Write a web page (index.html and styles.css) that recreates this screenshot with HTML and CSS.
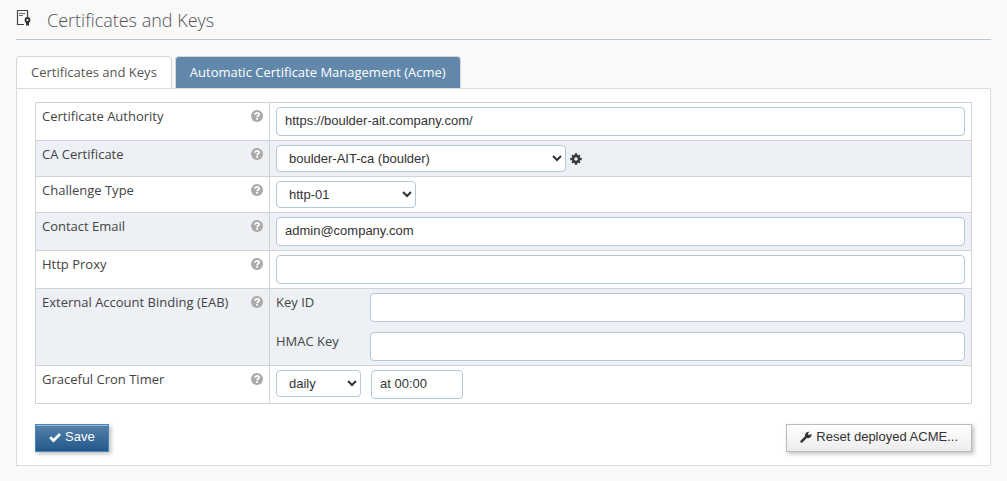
FILE: index.html
```html
<!DOCTYPE html>
<html lang="en">
<head>
  <meta charset="UTF-8" />
  <meta name="viewport" content="width=device-width, initial-scale=1.0" />
  <title>Certificates and Keys</title>
  <link rel="stylesheet" href="styles.css">
</head>
<body>
  <!-- shared icons -->
  <svg class="sprite" aria-hidden="true">
    <symbol id="icon-help" viewBox="0 0 12 12">
      <circle cx="6" cy="6" r="6" fill="#aaa" />
      <path d="M3.900 4.700C4.100 3.400 5 2.900 6.100 2.900c1.200 0 2 .7 2 1.600 0 1.300-2 1.300-2 2.700" fill="none" stroke="#fff" stroke-width="1.800" />
      <rect x="5.200" y="8" width="1.800" height="1.700" fill="#fff" />
    </symbol>
  </svg>

  <header class="page-header">
    <svg class="page-icon" viewBox="0 0 15 17" aria-hidden="true">
      <path d="M8 15.500H1.500v-14h10V8" fill="none" stroke="#444" stroke-width="1.200" />
      <path d="M3 4.500h6M3 6.500h4" stroke="#666" />
      <circle cx="11.500" cy="11" r="2" fill="none" stroke="#333" stroke-width="1.800" />
      <path d="M10 12.500h3V17l-1.500-1-1.500 1z" fill="#333" />
    </svg>
    <h1>Certificates and Keys</h1>
  </header>

  <nav class="tabs">
    <a href="#keys">Certificates and Keys</a>
    <a class="active" href="#acme">Automatic Certificate Management (Acme)</a>
  </nav>

  <form class="panel" id="acme">
    <table class="settings">
      <tr>
        <th>
          <div class="name"><label for="authority">Certificate Authority</label><svg class="help"><use href="#icon-help" /></svg></div>
        </th>
        <td><input type="text" id="authority" name="authority" value="https://boulder-ait.company.com/" /></td>
      </tr>
      <tr>
        <th>
          <div class="name"><label for="ca">CA Certificate</label><svg class="help"><use href="#icon-help" /></svg></div>
        </th>
        <td>
          <div class="fields">
            <select class="ca-select" id="ca" name="ca">
              <option>boulder-AIT-ca (boulder)</option>
            </select>
            <button class="gear" type="button" aria-label="CA settings">
              <svg viewBox="0 0 12 12">
                <path d="M4.800 0.300h2.400v11.400H4.800z M0.300 4.800h11.400v2.400H0.300z" />
                <path d="M5 0.500h2v11H5z M0.500 5h11v2H0.500z" transform="rotate(45 6 6)" />
                <circle cx="6" cy="6" r="3" fill="#edf0f5" stroke="#3a3a3a" stroke-width="2.400" />
              </svg>
            </button>
          </div>
        </td>
      </tr>
      <tr>
        <th>
          <div class="name"><label for="challenge">Challenge Type</label><svg class="help"><use href="#icon-help" /></svg></div>
        </th>
        <td>
          <div class="fields">
            <select class="challenge-select" id="challenge" name="challenge">
              <option>http-01</option>
            </select>
          </div>
        </td>
      </tr>
      <tr>
        <th>
          <div class="name"><label for="email">Contact Email</label><svg class="help"><use href="#icon-help" /></svg></div>
        </th>
        <td><input type="text" id="email" name="email" value="admin@company.com" /></td>
      </tr>
      <tr>
        <th>
          <div class="name"><label for="proxy">Http Proxy</label><svg class="help"><use href="#icon-help" /></svg></div>
        </th>
        <td><input type="text" id="proxy" name="proxy" /></td>
      </tr>
      <tr>
        <th>
          <div class="name"><span>External Account Binding (EAB)</span><svg class="help"><use href="#icon-help" /></svg></div>
        </th>
        <td>
          <div class="eab">
            <label for="key-id">Key ID</label>
            <input type="text" id="key-id" name="key-id" />
            <label for="hmac">HMAC Key</label>
            <input type="text" id="hmac" name="hmac" />
          </div>
        </td>
      </tr>
      <tr>
        <th>
          <div class="name"><label for="cron">Graceful Cron Timer</label><svg class="help"><use href="#icon-help" /></svg></div>
        </th>
        <td>
          <div class="fields timer">
            <select class="cron-select" id="cron" name="cron">
              <option>daily</option>
            </select>
            <input class="time" type="text" name="time" value="at 00:00" aria-label="Time" />
          </div>
        </td>
      </tr>
    </table>

    <div class="actions">
      <button class="btn save" type="submit">
        <svg viewBox="0 0 12 12"><path d="M1.200 6.300l3.300 3.200L11 3" fill="none" stroke="#fff" stroke-width="2.800" /></svg>
        Save
      </button>
      <button class="btn" type="button">
        <svg viewBox="0 0 12 12">
          <path d="M0.500 9.700L5 5.300C4.600 2.800 6.500 0.400 9.500 0.800L8 2.300l.3 1.500 1.500.3 1.700-1.400C12 5.600 9.400 7.800 6.800 7L2.400 11.500C1.200 12.300-.3 10.900.5 9.700z" fill="#333" />
        </svg>
        Reset deployed ACME...
      </button>
    </div>
  </form>
</body>
</html>
```

FILE: styles.css
```css
* {
  box-sizing: border-box;
}

body {
  margin: 0;
  padding: 0 16px 16px;
  background-color: #f9f9f9;
  color: #444;
  font-family: "Open Sans", sans-serif;
  font-size: 13px;
  line-height: 18px;
}

.sprite {
  display: none;
}

.page-header {
  display: flex;
  align-items: center;
  gap: 16px;
  height: 40px;
  border-bottom: 1px solid #b9c6d2;
}

.page-icon {
  width: 15px;
  height: 17px;
  margin-bottom: 4px;
}

h1 {
  margin: 0;
  color: #555;
  font-size: 18px;
  font-weight: 300;
}

.tabs {
  display: flex;
  gap: 3px;
  margin-top: 16px;
}

.tabs a {
  padding: 6px 14px 7px;
  border: 1px solid #d5d8da;
  border-bottom: none;
  border-radius: 4px 4px 0 0;
  background-color: #fff;
  color: #555;
  text-decoration: none;
}

.tabs a.active {
  background-color: #6188ab;
  color: #fff;
  font-weight: 500;
}

.panel {
  padding: 13px 18px;
  border: 1px solid #dcdcdc;
  background-color: #fff;
}

.settings {
  width: 100%;
  border-collapse: collapse;
}

.settings th,
.settings td {
  padding: 4px 6px;
  border: 1px solid #d0d3d6;
  vertical-align: top;
}

.settings th {
  width: 234px;
  font-weight: normal;
  text-align: left;
}

.settings tr:nth-child(even) {
  background-color: #edf0f5;
}

.name {
  display: flex;
  align-items: center;
  justify-content: space-between;
}

.help {
  width: 12px;
  height: 12px;
}

input,
select {
  border: 1px solid #b5c8d9;
  border-radius: 4px;
  background-color: #fff;
  color: #333;
  font-family: "Liberation Sans", Arial, sans-serif;
  font-size: 13px;
}

input {
  display: block;
  width: 100%;
  height: 29px;
  padding: 0 8px 2px;
}

select {
  height: 27px;
  padding: 0 0 0 8px;
}

.fields {
  display: flex;
  align-items: center;
  gap: 4px;
}

.timer {
  align-items: flex-start;
  gap: 10px;
}

.ca-select {
  width: 290px;
}

.challenge-select {
  width: 140px;
}

.cron-select {
  width: 85px;
}

.fields .time {
  width: 92px;
}

.gear {
  display: flex;
  padding: 0;
  border: none;
  background: none;
}

.gear svg {
  width: 12px;
  height: 12px;
  fill: #3a3a3a;
}

.eab {
  display: grid;
  grid-template-columns: 94px 1fr;
  row-gap: 10px;
}

.actions {
  display: flex;
  justify-content: space-between;
  margin-top: 20px;
}

.btn {
  display: flex;
  align-items: center;
  gap: 4px;
  height: 28px;
  padding: 0 13px 3px;
  border: 1px solid #bbb;
  background: linear-gradient(#fff, #ececec);
  box-shadow: 2px 2px 4px rgba(0, 0, 0, 0.25);
  color: #333;
  font-family: "Liberation Sans", Arial, sans-serif;
  font-size: 13px;
}

.btn svg {
  width: 12px;
  height: 12px;
}

.save {
  border-color: #4f83bd;
  background: linear-gradient(#5581aa, #22588b);
  box-shadow: inset 0 1px #9fb9d0, 2px 2px 4px rgba(0, 0, 0, 0.25);
  color: #fff;
}
```
